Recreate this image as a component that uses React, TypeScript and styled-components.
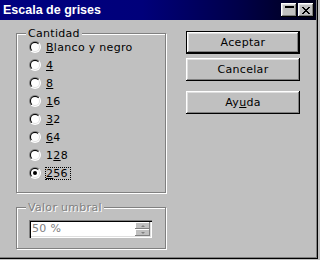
import styled, { createGlobalStyle } from "styled-components";

const GlobalStyle = createGlobalStyle`
  html, body {
    margin: 0;
    padding: 0;
    background: #c0c0c0;
  }
  body {
    width: 320px;
    height: 260px;
    overflow: hidden;
    font-family: "DejaVu Sans", sans-serif;
    font-size: 11px;
    letter-spacing: 0.3px;
    color: #000;
  }
`;

const Window = styled.div`
  width: 318px;
  height: 259px;
  box-sizing: border-box;
  display: flex;
  flex-direction: column;
  background: #c0c0c0;
  border-right: 1px solid #000;
  border-bottom: 1px solid #000;
  box-shadow: inset -1px -1px 0 #808080;
`;

const TitleBar = styled.div`
  height: 20px;
  flex-shrink: 0;
  margin-right: 1px;
  display: flex;
  align-items: flex-start;
  padding: 0 2px 0 3px;
  background: linear-gradient(90deg, #000080 0%, #00007a 45%, #00004a 75%, #000018 100%);
  color: #fff;
`;

const Title = styled.div`
  flex: 1;
  font-family: "Liberation Sans", Arial, sans-serif;
  font-weight: bold;
  font-size: 12.5px;
  letter-spacing: 0;
  line-height: 20px;
`;

const TitleButtons = styled.div`
  display: flex;
  gap: 1px;
  margin-top: 3px;
`;

const TitleButton = styled.div`
  width: 16px;
  height: 14px;
  box-sizing: border-box;
  display: flex;
  align-items: center;
  justify-content: center;
  background: #c0c0c0;
  box-shadow: inset -1px -1px 0 #000, inset 1px 1px 0 #fff,
    inset -2px -2px 0 #808080, inset 2px 2px 0 #dfdfdf;
`;

const Body = styled.div`
  flex: 1;
  display: flex;
  gap: 19px;
  padding-left: 16px;
`;

const LeftCol = styled.div`
  width: 151px;
  display: flex;
  flex-direction: column;
  padding-top: 13px;
`;

const RightCol = styled.div`
  width: 114px;
  display: flex;
  flex-direction: column;
  padding-top: 11px;
`;

const Group = styled.div<{ $top?: number; $pad: string }>`
  position: relative;
  width: 150px;
  box-sizing: border-box;
  margin-top: ${(p) => p.$top ?? 0}px;
  padding: ${(p) => p.$pad};
  border: 1px solid #808080;
  box-shadow: inset 1px 1px 0 #fff, 1px 1px 0 #fff;
`;

const GroupLabel = styled.span<{ $disabled?: boolean }>`
  position: absolute;
  top: -7px;
  left: 9px;
  padding: 0 2px;
  line-height: 13px;
  background: #c0c0c0;
  color: ${(p) => (p.$disabled ? "#808080" : "#000")};
  text-shadow: ${(p) => (p.$disabled ? "1px 1px 0 #fff" : "none")};
`;

const RadioRow = styled.div`
  height: 18px;
  display: flex;
  align-items: center;
  gap: 4px;
`;

const RadioOuter = styled.span`
  width: 12px;
  height: 12px;
  border-radius: 50%;
  display: flex;
  align-items: center;
  justify-content: center;
  background: linear-gradient(135deg, #808080 50%, #fff 50%);
`;

const RadioInner = styled.span`
  width: 10px;
  height: 10px;
  border-radius: 50%;
  display: flex;
  align-items: center;
  justify-content: center;
  background: linear-gradient(135deg, #000 50%, #dfdfdf 50%);
`;

const RadioFace = styled.span<{ $checked?: boolean }>`
  width: 8px;
  height: 8px;
  border-radius: 50%;
  display: flex;
  align-items: center;
  justify-content: center;
  background: #fff;
  &::after {
    content: "";
    width: 4px;
    height: 4px;
    border-radius: 50%;
    background: ${(p) => (p.$checked ? "#000" : "transparent")};
  }
`;

const RadioText = styled.span<{ $focus?: boolean }>`
  line-height: 11px;
  padding-right: 2px;
  border: 1px ${(p) => (p.$focus ? "dotted #000" : "solid transparent")};
  white-space: nowrap;
  u {
    text-underline-offset: 1px;
  }
`;

const Field = styled.div`
  width: 123px;
  height: 18px;
  box-sizing: border-box;
  padding: 2px;
  display: flex;
  background: #fff;
  box-shadow: inset 1px 1px 0 #808080, inset 2px 2px 0 #000,
    inset -1px -1px 0 #fff, inset -2px -2px 0 #dfdfdf;
`;

const FieldText = styled.span`
  flex: 1;
  padding-left: 1px;
  line-height: 14px;
  color: #808080;
`;

const Spinner = styled.div`
  width: 15px;
  display: flex;
  flex-direction: column;
`;

const SpinButton = styled.div`
  flex: 1;
  display: flex;
  align-items: center;
  justify-content: center;
  background: #c0c0c0;
  box-shadow: inset -1px -1px 0 #808080, inset 1px 1px 0 #fff;
`;

const Arrow = styled.span<{ $down?: boolean }>`
  width: 0;
  height: 0;
  border-left: 2px solid transparent;
  border-right: 2px solid transparent;
  ${(p) =>
    p.$down
      ? "border-top: 2px solid #808080;"
      : "border-bottom: 2px solid #808080;"}
`;

const Button = styled.div<{ $top?: number; $primary?: boolean }>`
  width: 114px;
  height: 23px;
  box-sizing: border-box;
  margin-top: ${(p) => p.$top ?? 0}px;
  display: flex;
  align-items: center;
  justify-content: center;
  background: #c0c0c0;
  border: ${(p) => (p.$primary ? "1px solid #000" : "none")};
  box-shadow: inset -1px -1px 0 #000, inset 1px 1px 0 #fff,
    inset -2px -2px 0 #808080, inset 2px 2px 0 #dfdfdf;
  u {
    text-underline-offset: 1px;
  }
`;

const Radio = ({ checked, focus, children }: any) => (
  <RadioRow>
    <RadioOuter>
      <RadioInner>
        <RadioFace $checked={checked} />
      </RadioInner>
    </RadioOuter>
    <RadioText $focus={focus}>{children}</RadioText>
  </RadioRow>
);

export default function App() {
  return (
    <>
      <GlobalStyle />
      <Window>
        <TitleBar>
          <Title>Escala de grises</Title>
          <TitleButtons>
            <TitleButton>
              <svg width="9" height="9" viewBox="0 0 9 9" shapeRendering="crispEdges">
                <rect x="0" y="0" width="9" height="2" fill="#000" />
              </svg>
            </TitleButton>
            <TitleButton>
              <svg width="8" height="7" viewBox="0 0 8 7" shapeRendering="crispEdges">
                <path
                  d="M0 0h2v1H0zM6 0h2v1H6zM1 1h2v1H1zM5 1h2v1H5zM2 2h4v1H2zM3 3h2v1H3zM2 4h4v1H2zM1 5h2v1H1zM5 5h2v1H5zM0 6h2v1H0zM6 6h2v1H6z"
                  fill="#000"
                />
              </svg>
            </TitleButton>
          </TitleButtons>
        </TitleBar>
        <Body>
          <LeftCol>
            <Group $pad="4px 0 10px 12px">
              <GroupLabel>Cantidad</GroupLabel>
              <Radio>
                <u>B</u>lanco y negro
              </Radio>
              <Radio>
                <u>4</u>
              </Radio>
              <Radio>
                <u>8</u>
              </Radio>
              <Radio>
                <u>1</u>6
              </Radio>
              <Radio>
                <u>3</u>2
              </Radio>
              <Radio>
                <u>6</u>4
              </Radio>
              <Radio>
                1<u>2</u>8
              </Radio>
              <Radio checked focus>
                <u>2</u>56
              </Radio>
            </Group>
            <Group $top={14} $pad="12px 0 10px 12px">
              <GroupLabel $disabled>Valor umbral</GroupLabel>
              <Field>
                <FieldText>50 %</FieldText>
                <Spinner>
                  <SpinButton>
                    <Arrow />
                  </SpinButton>
                  <SpinButton>
                    <Arrow $down />
                  </SpinButton>
                </Spinner>
              </Field>
            </Group>
          </LeftCol>
          <RightCol>
            <Button $primary>Aceptar</Button>
            <Button $top={4}>Cancelar</Button>
            <Button $top={10}>
              Ay<u>u</u>da
            </Button>
          </RightCol>
        </Body>
      </Window>
    </>
  );
}
